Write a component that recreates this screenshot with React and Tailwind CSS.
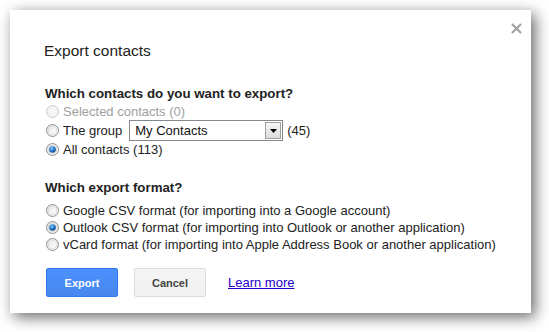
import React from "react";

function Radio({ checked = false, disabled = false }) {
  const stroke = disabled ? "#c8c8c8" : "#8e8f8f";
  return (
    <svg width="13" height="13" viewBox="0 0 13 13" className="shrink-0">
      <defs>
        <linearGradient id={disabled ? "rgd" : "rg"} x1="0" y1="0" x2="1" y2="1">
          <stop offset="0" stopColor={disabled ? "#f4f4f4" : "#e8e8e8"} />
          <stop offset="1" stopColor={disabled ? "#fafafa" : "#fdfdfd"} />
        </linearGradient>
        <radialGradient id="dot" cx="0.4" cy="0.35" r="0.7">
          <stop offset="0" stopColor="#8fd0ff" />
          <stop offset="0.5" stopColor="#2a7fd4" />
          <stop offset="1" stopColor="#0b3d7a" />
        </radialGradient>
      </defs>
      <circle cx="6.5" cy="6.5" r="6" fill={`url(#${disabled ? "rgd" : "rg"})`} stroke={stroke} />
      <circle cx="6.5" cy="6.5" r="4.4" fill="none" stroke={disabled ? "#ececec" : "#d0d0d0"} strokeWidth="0.8" />
      {checked && <circle cx="6.5" cy="6.5" r="3.3" fill="url(#dot)" />}
    </svg>
  );
}

function Option({ checked, disabled, children, tall }) {
  return (
    <div className={`flex items-center gap-[4px] ${tall ? "h-[21px]" : "h-[17px]"}`}>
      <Radio checked={checked} disabled={disabled} />
      <div className={`flex items-center ${disabled ? "text-[#a0a0a0]" : "text-[#222]"}`}>{children}</div>
    </div>
  );
}

export default function App() {
  return (
    <div
      className="w-[549px] h-[332px] bg-white pl-[10px] pt-[10px] overflow-hidden"
      style={{ fontFamily: '"Liberation Sans", Arial, sans-serif' }}
    >
      <div className="relative w-[521px] h-[303px] bg-white shadow-[4px_4px_14px_rgba(0,0,0,0.6)] pl-[34px] pt-[31px] text-[13px] leading-[16px]">
        <svg className="absolute left-[501px] top-[13px]" width="11" height="11" viewBox="0 0 11 11">
          <path d="M1 1L10 10M10 1L1 10" stroke="#a3a3a3" strokeWidth="2.2" />
        </svg>

        <div className="text-[15.5px] leading-[19px] text-[#222]">Export contacts</div>

        <div className="mt-[26px] pl-[1px] font-bold text-[13.3px] text-[#222]">Which contacts do you want to export?</div>
        <div className="mt-[1px] pl-[2px]">
          <Option disabled>Selected contacts (0)</Option>
          <Option tall>
            <span>The group</span>
            <div className="ml-[7px] w-[154px] h-[21px] border border-[#828790] flex items-center justify-between pl-[5px] pr-[1px] text-[#111]">
              <span>My Contacts</span>
              <div className="w-[16px] h-[17px] border border-[#a0a0a0] bg-gradient-to-b from-[#f6f6f6] to-[#dcdcdc] flex items-center justify-center">
                <svg width="7" height="4" viewBox="0 0 7 4">
                  <path d="M0 0H7L3.5 4Z" fill="#000" />
                </svg>
              </div>
            </div>
            <span className="ml-[4px]">(45)</span>
          </Option>
          <Option checked>All contacts (113)</Option>
        </div>

        <div className="mt-[22px] pl-[1px] font-bold text-[13.3px] text-[#222]">Which export format?</div>
        <div className="mt-[6px] pl-[2px]">
          <Option>Google CSV format (for importing into a Google account)</Option>
          <Option checked>Outlook CSV format (for importing into Outlook or another application)</Option>
          <Option>vCard format (for importing into Apple Address Book or another application)</Option>
        </div>

        <div className="mt-[15px] flex items-center gap-[16px] pl-[2px]">
          <button className="w-[72px] h-[29px] rounded-[2px] border border-[#3079ed] bg-gradient-to-b from-[#4d90fe] to-[#4787ed] text-white font-bold text-[11px]">
            Export
          </button>
          <button className="w-[72px] h-[29px] rounded-[2px] border border-[#dcdcdc] bg-gradient-to-b from-[#f5f5f5] to-[#f1f1f1] text-[#444] font-bold text-[11px]">
            Cancel
          </button>
          <a href="#" className="ml-[6px] text-[13px] text-[#2200cc] underline">
            Learn more
          </a>
        </div>
      </div>
    </div>
  );
}
